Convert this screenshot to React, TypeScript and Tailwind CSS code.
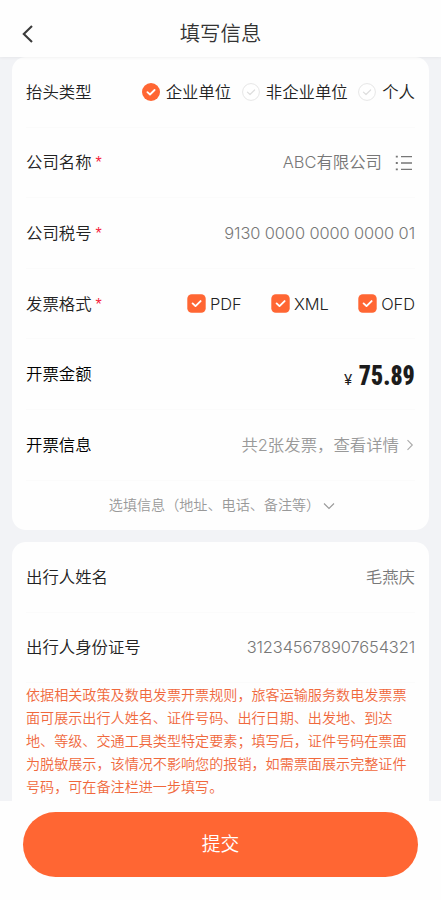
import React, { useState } from 'react';

const titleTypes = [
  { id: 'company', label: '企业单位' },
  { id: 'nonCompany', label: '非企业单位' },
  { id: 'personal', label: '个人' },
];

interface RowProps {
  label: string;
  required?: boolean;
  labelClass?: string;
  children: React.ReactNode;
}

const Row: React.FC<RowProps> = ({ label, required, labelClass = 'text-[#222]', children }) => (
  <div className="flex h-[70.6px] items-center justify-between border-b border-[#fbfbfb] whitespace-nowrap">
    <div className={`flex items-center ${labelClass}`}>
      <span>{label}</span>
      {required && (
        <span className="ml-[4px] pt-[2px] font-['Liberation_Sans',sans-serif] text-[16px] font-normal leading-none text-[#f5223c]">*</span>
      )}
    </div>
    {children}
  </div>
);

const RadioIcon: React.FC<{ checked: boolean }> = ({ checked }) => (
  <svg width="18" height="18" viewBox="0 0 18 18" fill="none">
    <circle cx="9" cy="9" r={checked ? 9 : 8.4} fill={checked ? '#ff6633' : '#fff'} stroke={checked ? 'none' : '#e6e6e6'} />
    <path
      d="M5.4 9.1 8 11.5l4.6-4.5"
      stroke={checked ? '#fff' : '#dedede'}
      strokeWidth={checked ? 1.8 : 1.2}
      strokeLinecap="round"
      strokeLinejoin="round"
    />
  </svg>
);

const CheckIcon: React.FC<{ checked: boolean }> = ({ checked }) => (
  <svg width="19" height="19" viewBox="0 0 19 19" fill="none">
    <rect x="0.3" y="0.3" width="18.4" height="18.4" rx="4.5" fill={checked ? '#ff6633' : '#e6e6e6'} />
    <path d="m5.6 9.4 2.9 2.7 5.1-5" stroke="#fff" strokeWidth="1.9" strokeLinecap="round" strokeLinejoin="round" />
  </svg>
);

const App: React.FC = () => {
  const [titleType, setTitleType] = useState('company');
  const [formats, setFormats] = useState({ PDF: true, XML: true, OFD: true });

  const toggle = (key: 'PDF' | 'XML' | 'OFD') => setFormats({ ...formats, [key]: !formats[key] });

  return (
    <div className="flex h-[900px] w-full flex-col overflow-hidden bg-[#f2f3f6] font-['Inter','Noto_Sans_CJK_SC',sans-serif] text-[16.4px] font-[350] leading-6">
      {/* Header */}
      <header className="z-10 grid h-[57px] shrink-0 grid-cols-[60px_1fr_60px] items-center bg-[#fefefe] pt-[11px] shadow-[0_1px_3px_rgba(0,0,0,0.05)]">
        <button className="pl-[21px]">
          <svg width="13" height="18" viewBox="0 0 13 18" fill="none" stroke="#3b3b3b" strokeWidth="2.1">
            <path d="M11 1 2.8 9l8.2 8" />
          </svg>
        </button>
        <h1 className="text-center text-[20.4px] text-[#333]">填写信息</h1>
      </header>

      {/* Form */}
      <main className="min-h-0 flex-1 overflow-hidden px-[12px]">
        <section className="h-[473px] rounded-[14px] bg-[#fefefe] px-[14px]">
          <Row label="抬头类型">
            <div className="flex items-center text-[#222]">
              {titleTypes.map((t) => (
                <button key={t.id} onClick={() => setTitleType(t.id)} className="ml-[10.5px] flex items-center gap-[6px]">
                  <RadioIcon checked={titleType === t.id} />
                  {t.label}
                </button>
              ))}
            </div>
          </Row>
          <Row label="公司名称" required>
            <div className="flex items-center gap-[13px] text-[#777]">
              <span>ABC有限公司</span>
              <svg className="mt-px" width="20" height="16" viewBox="0 0 20 16" stroke="#777" strokeWidth="1.3" fill="none">
                <path d="M6 1.7h11M6 8h11M6 14.3h11" />
                <path d="M.8 1.7h2M.8 8h2M.8 14.3h2" strokeWidth="1.8" />
              </svg>
            </div>
          </Row>
          <Row label="公司税号" required>
            <span className="tracking-[-0.1px] text-[#777]">9130 0000 0000 0000 01</span>
          </Row>
          <Row label="发票格式" required>
            <div className="flex items-center gap-[29.3px] text-[#222]">
              {(['PDF', 'XML', 'OFD'] as const).map((f) => (
                <button key={f} onClick={() => toggle(f)} className="flex items-center gap-[4px]">
                  <CheckIcon checked={formats[f]} />
                  {f}
                </button>
              ))}
            </div>
          </Row>
          <Row label="开票金额" labelClass="text-black">
            <div className="flex items-baseline pt-[7px] text-[#1c1c1c]">
              <span className="-mr-[3px] text-[15px] font-normal">¥</span>
              <span className="origin-right scale-x-[0.85] font-['Roboto_Condensed',sans-serif] text-[28px] font-black">75.89</span>
            </div>
          </Row>
          <Row label="开票信息" labelClass="text-black">
            <button className="flex items-center text-[#999]">
              共2张发票，查看详情
              <svg className="ml-[7px]" width="9" height="12" viewBox="0 0 9 12" fill="none" stroke="#aaa" strokeWidth="1.1">
                <path d="m1.5 1.2 4.8 4.8-4.8 4.8" />
              </svg>
            </button>
          </Row>
          <button className="flex h-[49px] w-full items-center justify-center pl-[3px] text-[14.1px] text-[#999]">
            选填信息（地址、电话、备注等）
            <svg className="ml-[3px] mt-[2px]" width="12" height="8" viewBox="0 0 12 8" fill="none" stroke="#999" strokeWidth="1.1">
              <path d="m1 1.5 5 5 5-5" />
            </svg>
          </button>
        </section>

        <section className="mt-[12px] h-[300px] rounded-[14px] bg-[#fefefe] px-[14px]">
          <Row label="出行人姓名">
            <span className="text-[#777]">毛燕庆</span>
          </Row>
          <Row label="出行人身份证号">
            <span className="tracking-[-0.1px] text-[#777]">312345678907654321</span>
          </Row>
          <p className="w-[386px] text-[14.1px] leading-[23px] text-[#f0683c]">
            依据相关政策及数电发票开票规则，旅客运输服务数电发票票面可展示出行人姓名、证件号码、出行日期、出发地、到达地、等级、交通工具类型特定要素；填写后，证件号码在票面为脱敏展示，该情况不影响您的报销，如需票面展示完整证件号码，可在备注栏进一步填写。
          </p>
        </section>
      </main>

      {/* Submit */}
      <footer className="z-10 h-[99px] shrink-0 bg-[#fefefe] px-[23px] pt-[11px]">
        <button className="h-[65px] w-full rounded-full bg-[#ff6633] pt-px text-[18.8px] text-white">提交</button>
      </footer>
    </div>
  );
};

export default App;
